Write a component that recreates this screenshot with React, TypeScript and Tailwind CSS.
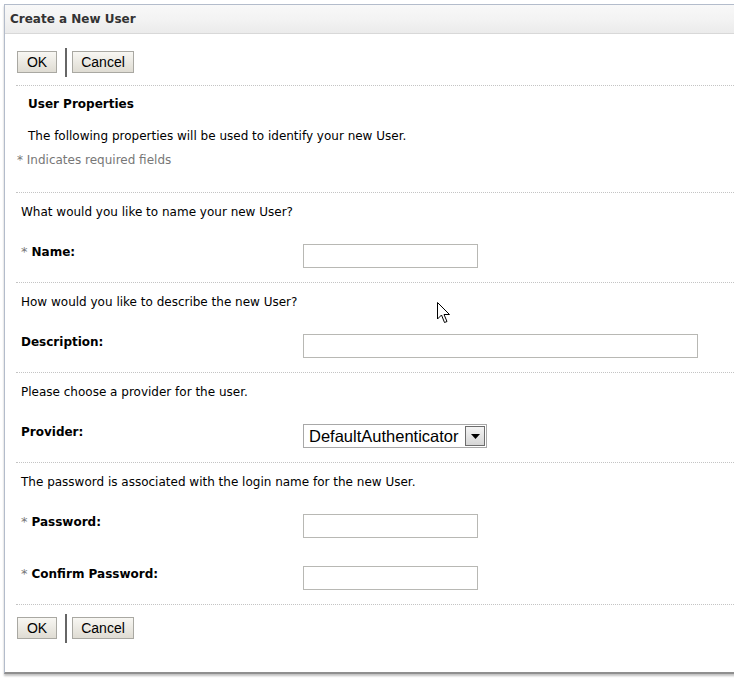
import React from 'react';

const body = "font-['DejaVu_Sans',Verdana,sans-serif]";

function Buttons() {
  return (
    <div className="flex items-start h-[29px] pl-[1px]">
      <button className="mt-[3px] h-[22px] w-[40px] border border-[#a9a8a2] bg-gradient-to-b from-[#f8f7f3] to-[#dfdcd3] text-[14px] text-black font-['Liberation_Sans',Arial,sans-serif] leading-none">
        OK
      </button>
      <div className="w-[2px] h-[29px] bg-[#666666] ml-[8px] mr-[5px]"></div>
      <button className="mt-[3px] h-[22px] w-[62px] border border-[#a9a8a2] bg-gradient-to-b from-[#f8f7f3] to-[#dfdcd3] text-[14px] text-black font-['Liberation_Sans',Arial,sans-serif] leading-none">
        Cancel
      </button>
    </div>);

}

function Label({ text, required }: {text: string;required?: boolean;}) {
  return (
    <div className="w-[282px] leading-[16px] text-[12px] text-black">
      {required && <span className="text-[#777777] text-[13px] mr-[4px]">*</span>}
      <span className="font-bold">{text}</span>
    </div>);

}

function TextBox({ width }: {width: string;}) {
  return <input className={`${width} h-[24px] border border-[#b8b8b4] bg-white outline-none`} />;
}

const sections = [
{
  question: 'What would you like to name your new User?',
  rows: [{ label: 'Name:', required: true, kind: 'short' }]
},
{
  question: 'How would you like to describe the new User?',
  rows: [{ label: 'Description:', required: false, kind: 'long' }]
},
{
  question: 'Please choose a provider for the user.',
  rows: [{ label: 'Provider:', required: false, kind: 'select' }]
},
{
  question: 'The password is associated with the login name for the new User.',
  rows: [
  { label: 'Password:', required: true, kind: 'short' },
  { label: 'Confirm Password:', required: true, kind: 'short' }]

}];


function Field({ kind }: {kind: string;}) {
  if (kind === 'long') return <TextBox width="w-[395px]" />;
  if (kind === 'select')
  return (
    <div className="w-[184px] h-[24px] border border-[#a8a8a8] bg-white flex items-center justify-between pl-[5px] pr-[1px]">
        <span className="text-[16.5px] text-black font-['Liberation_Sans',Arial,sans-serif] leading-none">
          DefaultAuthenticator
        </span>
        <span className="w-[20px] h-[20px] border border-[#6d6d6d] bg-gradient-to-b from-[#f4f4f4] to-[#d6d6d6] flex items-center justify-center">
          <svg width="9" height="5" viewBox="0 0 9 5">
            <path d="M0 0 L9 0 L4.5 5 Z" fill="#000" />
          </svg>
        </span>
      </div>);

  return <TextBox width="w-[175px]" />;
}

export default function App() {
  return (
    <div className={`relative w-[734px] h-[682px] bg-white overflow-hidden pt-[4px] pl-[4px] ${body}`}>
      <div className="w-[780px] h-[670px] border-t border-l border-[#b3bccb] border-b-2 border-b-[#8f8f8f] shadow-[0_2px_2px_rgba(0,0,0,0.25)]">
        {/* Header */}
        <div className="h-[29px] bg-gradient-to-b from-[#f8f8f8] via-[#f3f3f3] to-[#ebebeb] border-b border-[#d8d8d8] flex items-center pl-[5px]">
          <h1 className="text-[12px] font-bold text-[#333333] leading-none">Create a New User</h1>
        </div>

        <div className="pl-[11px]">
          <div className="pt-[14px] pb-[8px]">
            <Buttons />
          </div>

          {/* User Properties */}
          <div className="border-t border-dotted border-[#c4c4c4] pt-[10px] h-[107px]">
            <div className="pl-[12px] text-[12px] font-bold text-black leading-[16px]">User Properties</div>
            <div className="pl-[12px] mt-[16px] text-[12px] text-black leading-[16px]">
              The following properties will be used to identify your new User.
            </div>
            <div className="pl-[1px] mt-[8px] text-[12px] text-[#777777] leading-[16px]">
              * Indicates required fields
            </div>
          </div>

          {sections.map((s, i) =>
          <div key={i} className="border-t border-dotted border-[#c4c4c4] pt-[11px] pb-[14px] pl-[5px]">
              <div className="text-[12px] text-black leading-[16px]">{s.question}</div>
              <div className="mt-[24px] flex flex-col gap-[28px]">
                {s.rows.map((r, j) =>
              <div key={j} className="flex items-start">
                    <Label text={r.label} required={r.required} />
                    <Field kind={r.kind} />
                  </div>
              )}
              </div>
            </div>
          )}

          <div className="border-t border-dotted border-[#c4c4c4] pt-[9px]">
            <Buttons />
          </div>
        </div>
      </div>

      {/* mouse pointer */}
      <svg className="absolute left-[437px] top-[302px]" width="14" height="22" viewBox="0 0 14 22">
        <path d="M0.5 0.5 L0.5 17 L4.5 13 L7.5 20.5 L10 19.5 L7 12.5 L12.5 12.5 Z" fill="#fff" stroke="#000" strokeWidth="1" />
      </svg>
    </div>);

}
